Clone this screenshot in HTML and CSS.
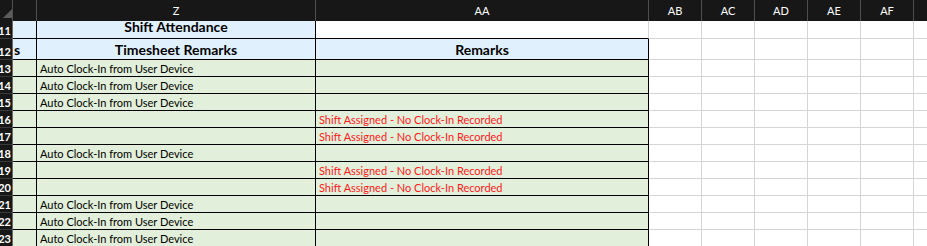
FILE: index.html
```html
<!DOCTYPE html>
<html>
<head>
<meta charset="utf-8">
<link rel="stylesheet" href="styles.css">
</head>
<body>
<div class="sheet">
  <div class="ch corner"><span class="tri"></span></div>
  <div class="ch"></div>
  <div class="ch">Z</div>
  <div class="ch">AA</div>
  <div class="ch">AB</div>
  <div class="ch">AC</div>
  <div class="ch">AD</div>
  <div class="ch">AE</div>
  <div class="ch">AF</div>
  <div class="ch last"></div>

  <div class="rh"><span>11</span></div>
  <div class="c blue bk"></div>
  <div class="c blue bk title">Shift Attendance</div>
  <div class="c aa11"></div>
  <div class="c g"></div><div class="c g"></div><div class="c g"></div><div class="c g"></div><div class="c g"></div><div class="c g last"></div>

  <div class="rh"><span>12</span></div>
  <div class="c blue bk spill"><span>s</span></div>
  <div class="c blue bk head">Timesheet Remarks</div>
  <div class="c blue bk head">Remarks</div>
  <div class="c g"></div><div class="c g"></div><div class="c g"></div><div class="c g"></div><div class="c g"></div><div class="c g last"></div>

  <div class="rh"><span>13</span></div>
  <div class="c green bk"></div>
  <div class="c green bk txt">Auto Clock-In from User Device</div>
  <div class="c green bk"></div>
  <div class="c g"></div><div class="c g"></div><div class="c g"></div><div class="c g"></div><div class="c g"></div><div class="c g last"></div>

  <div class="rh"><span>14</span></div>
  <div class="c green bk"></div>
  <div class="c green bk txt">Auto Clock-In from User Device</div>
  <div class="c green bk"></div>
  <div class="c g"></div><div class="c g"></div><div class="c g"></div><div class="c g"></div><div class="c g"></div><div class="c g last"></div>

  <div class="rh"><span>15</span></div>
  <div class="c green bk"></div>
  <div class="c green bk txt">Auto Clock-In from User Device</div>
  <div class="c green bk"></div>
  <div class="c g"></div><div class="c g"></div><div class="c g"></div><div class="c g"></div><div class="c g"></div><div class="c g last"></div>

  <div class="rh"><span>16</span></div>
  <div class="c green bk"></div>
  <div class="c green bk txt"></div>
  <div class="c green bk txt red">Shift Assigned - No Clock-In Recorded</div>
  <div class="c g"></div><div class="c g"></div><div class="c g"></div><div class="c g"></div><div class="c g"></div><div class="c g last"></div>

  <div class="rh"><span>17</span></div>
  <div class="c green bk"></div>
  <div class="c green bk txt"></div>
  <div class="c green bk txt red">Shift Assigned - No Clock-In Recorded</div>
  <div class="c g"></div><div class="c g"></div><div class="c g"></div><div class="c g"></div><div class="c g"></div><div class="c g last"></div>

  <div class="rh"><span>18</span></div>
  <div class="c green bk"></div>
  <div class="c green bk txt">Auto Clock-In from User Device</div>
  <div class="c green bk"></div>
  <div class="c g"></div><div class="c g"></div><div class="c g"></div><div class="c g"></div><div class="c g"></div><div class="c g last"></div>

  <div class="rh"><span>19</span></div>
  <div class="c green bk"></div>
  <div class="c green bk txt"></div>
  <div class="c green bk txt red">Shift Assigned - No Clock-In Recorded</div>
  <div class="c g"></div><div class="c g"></div><div class="c g"></div><div class="c g"></div><div class="c g"></div><div class="c g last"></div>

  <div class="rh"><span>20</span></div>
  <div class="c green bk"></div>
  <div class="c green bk txt"></div>
  <div class="c green bk txt red">Shift Assigned - No Clock-In Recorded</div>
  <div class="c g"></div><div class="c g"></div><div class="c g"></div><div class="c g"></div><div class="c g"></div><div class="c g last"></div>

  <div class="rh"><span>21</span></div>
  <div class="c green bk"></div>
  <div class="c green bk txt">Auto Clock-In from User Device</div>
  <div class="c green bk"></div>
  <div class="c g"></div><div class="c g"></div><div class="c g"></div><div class="c g"></div><div class="c g"></div><div class="c g last"></div>

  <div class="rh"><span>22</span></div>
  <div class="c green bk"></div>
  <div class="c green bk txt">Auto Clock-In from User Device</div>
  <div class="c green bk"></div>
  <div class="c g"></div><div class="c g"></div><div class="c g"></div><div class="c g"></div><div class="c g"></div><div class="c g last"></div>

  <div class="rh"><span>23</span></div>
  <div class="c green bk"></div>
  <div class="c green bk txt">Auto Clock-In from User Device</div>
  <div class="c green bk"></div>
  <div class="c g"></div><div class="c g"></div><div class="c g"></div><div class="c g"></div><div class="c g"></div><div class="c g last"></div>
</div>
</body>
</html>
```
FILE: styles.css
```css
html, body {
  margin: 0;
  padding: 0;
  background: #ffffff;
  overflow: hidden;
}
.sheet {
  display: grid;
  grid-template-columns: 13px 24px 279px 333px 53px 53px 53px 53px 53px 1fr;
  grid-template-rows: 21px 18px 21px repeat(11, 17px);
  font-family: Lato, "Open Sans", sans-serif;
  width: 927px;
}
.sheet > div {
  box-sizing: border-box;
  overflow: hidden;
  white-space: nowrap;
}
.ch {
  background: #171717;
  border-right: 1px solid #4e4e4e;
  color: #ffffff;
  font-size: 11px;
  display: flex;
  align-items: center;
  justify-content: center;
}
.ch.last { border-right: none; }
.corner { position: relative; }
.tri {
  position: absolute;
  left: 3px;
  bottom: 3px;
  width: 0;
  height: 0;
  border-left: 9px solid transparent;
  border-bottom: 9px solid #5c5c5c;
}
.rh {
  background: #171717;
  border-right: 1px solid #6a6a6a;
  border-bottom: 1px solid #3a3a3a;
  color: #ffffff;
  font-size: 11px;
  font-weight: 700;
  display: flex;
  justify-content: flex-end;
  align-items: flex-end;
  padding-right: 1px;
  padding-bottom: 1px;
}
.c {
  border-right: 1px solid #d4d4d4;
  border-bottom: 1px solid #d4d4d4;
  display: flex;
  align-items: flex-end;
}
.c.last { border-right: none; }
.blue { background: #e1f0fd; }
.green { background: #e2efda; }
.bk {
  border-right-color: #000000;
  border-bottom-color: #000000;
}
.aa11 {
  background: #ffffff;
  border-bottom-color: #000000;
}
.title, .head {
  justify-content: center;
  font-weight: 700;
  font-size: 14px;
  color: #000000;
}
.title { line-height: 12px; padding-bottom: 5px; }
.head { padding-bottom: 1px; }
.spill {
  justify-content: flex-start;
  padding-left: 1px;
  font-weight: 700;
  font-size: 14px;
  padding-bottom: 1px;
}
.txt {
  font-size: 11px;
  padding-left: 3px;
  padding-bottom: 1px;
  color: #000000;
}
.red { color: #ff1a1a; }
```
